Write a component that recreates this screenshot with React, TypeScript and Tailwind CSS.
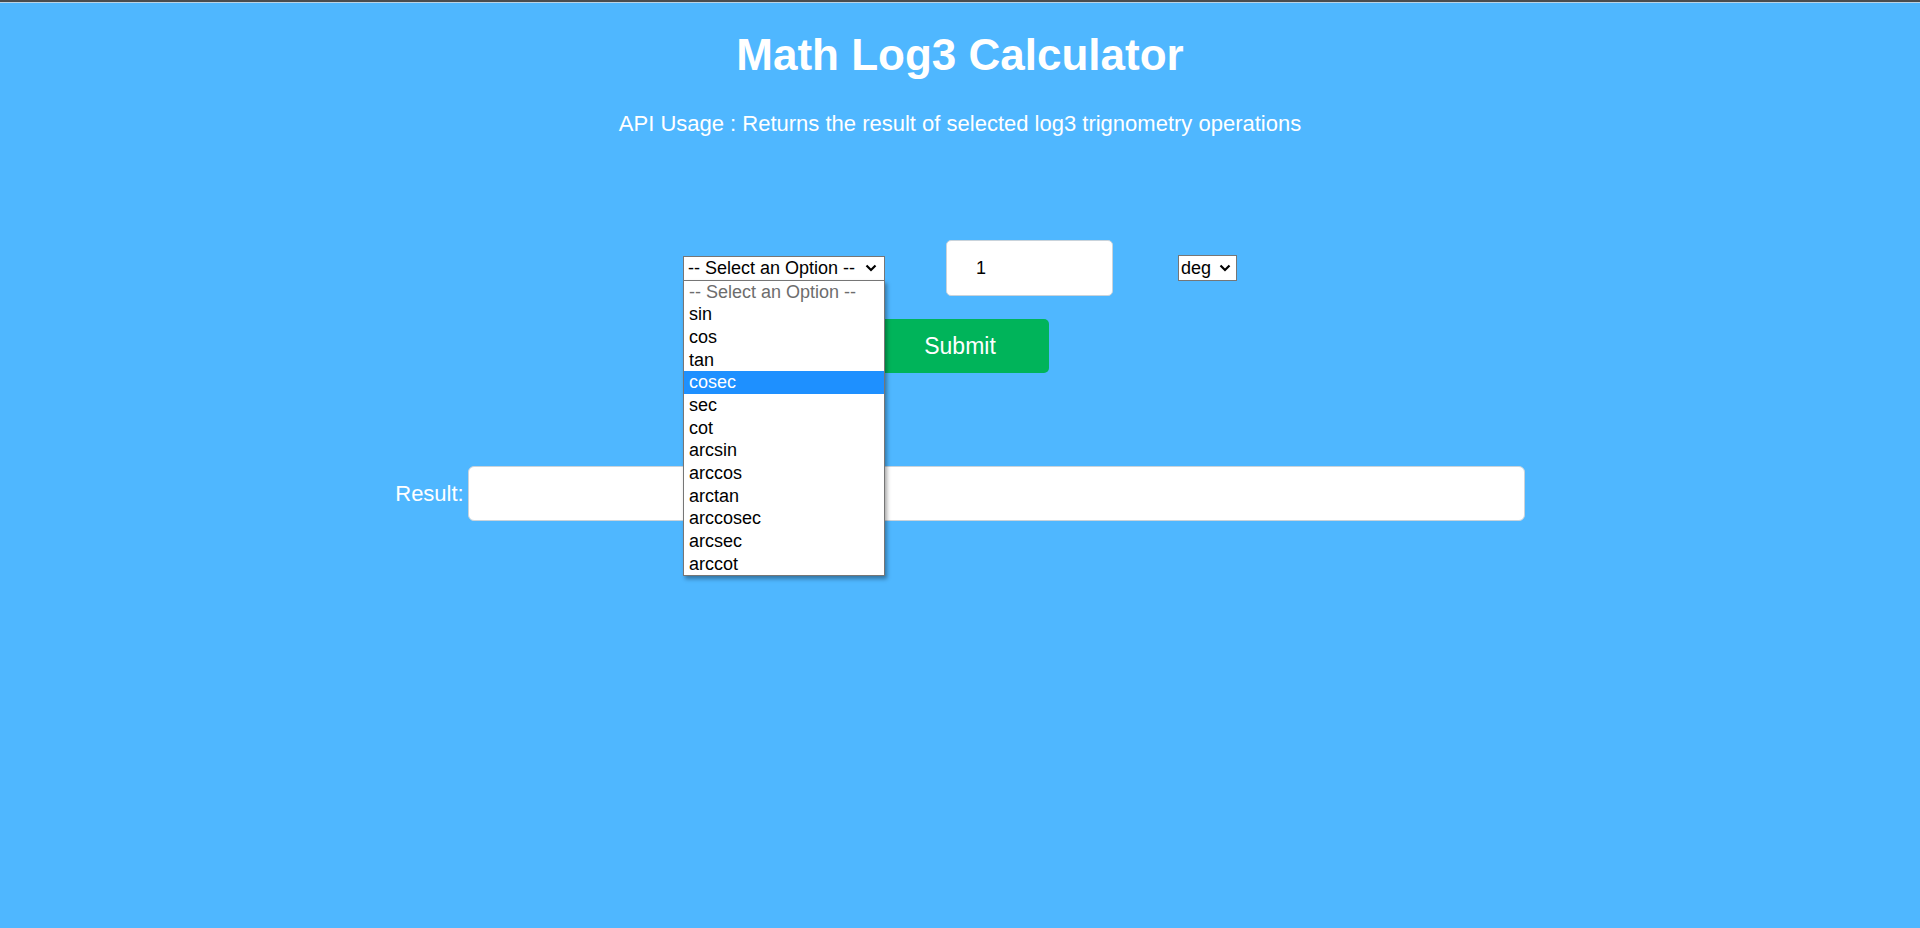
import { useState } from "react";

const OPTIONS = [
	"sin",
	"cos",
	"tan",
	"cosec",
	"sec",
	"cot",
	"arcsin",
	"arccos",
	"arctan",
	"arccosec",
	"arcsec",
	"arccot",
];

const Chevron = ({ className }: { className?: string }) => (
	<svg
		viewBox="0 0 12 8"
		className={className}
		fill="none"
		stroke="currentColor"
		strokeWidth="2.2"
	>
		<path d="M1.5 1.5 6 6l4.5-4.5" />
	</svg>
);

const OptionList = ({ active }: { active: string }) => (
	<div className="absolute left-0 top-[24px] z-10 w-[202px] border border-[#767676] bg-white shadow-[2px_3px_4px_rgba(0,0,0,0.35)]">
		<div className="h-[22.7px] pl-[5px] leading-[22.7px] text-[#6d6d6d]">
			-- Select an Option --
		</div>
		{OPTIONS.map((op) => (
			<div
				key={op}
				className={
					op === active
						? "h-[22.7px] bg-[#1e90ff] pl-[5px] leading-[22.7px] text-white"
						: "h-[22.7px] pl-[5px] leading-[22.7px] text-black"
				}
			>
				{op}
			</div>
		))}
	</div>
);

const App = () => {
	const [value, setValue] = useState("1");

	return (
		<div className="min-h-screen bg-[#4fb7ff] font-['Liberation_Sans',Arial,sans-serif]">
			<div className="h-[2px] bg-[#4a4d50]" />
			<div className="h-px bg-[#b9d3e6]" />

			<div className="flex flex-col items-center pt-[27px]">
				<h1 className="text-[44px] font-bold leading-[50px] text-white">
					Math Log3 Calculator
				</h1>
				<p className="mt-[31px] text-[22px] leading-[26px] text-white">
					API Usage : Returns the result of selected log3 trignometry
					operations
				</p>

				<div className="mt-[103px] flex h-[56px] items-center text-[18px]">
					<div className="relative mr-[61px]">
						<div className="flex h-[25px] w-[202px] items-center justify-between border border-[#767676] bg-white pl-[4px] pr-[7px] text-black">
							<span>-- Select an Option --</span>
							<Chevron className="h-[8px] w-[12px]" />
						</div>
						<OptionList active="cosec" />
					</div>

					<input
						type="text"
						value={value}
						onChange={(e) => setValue(e.target.value)}
						className="mr-[65px] h-[56px] w-[167px] rounded-[5px] border border-[#c9d3db] bg-white pl-[29px] text-[18px] text-black outline-none"
					/>

					<div className="flex h-[26px] w-[59px] items-center justify-between border border-[#767676] bg-white pl-[2px] pr-[5px] text-black">
						<span>deg</span>
						<Chevron className="h-[8px] w-[12px]" />
					</div>
				</div>

				<button className="mt-[23px] h-[54px] w-[177px] rounded-[5px] bg-[#00b45a] text-[23px] text-white">
					Submit
				</button>

				<div className="mt-[93px] flex items-center gap-[4px]">
					<span className="text-[22px] text-white">Result:</span>
					<input
						type="text"
						readOnly
						className="h-[55px] w-[1057px] rounded-[6px] border border-[#c9d3db] bg-white outline-none"
					/>
				</div>
			</div>
		</div>
	);
};

export default App;
